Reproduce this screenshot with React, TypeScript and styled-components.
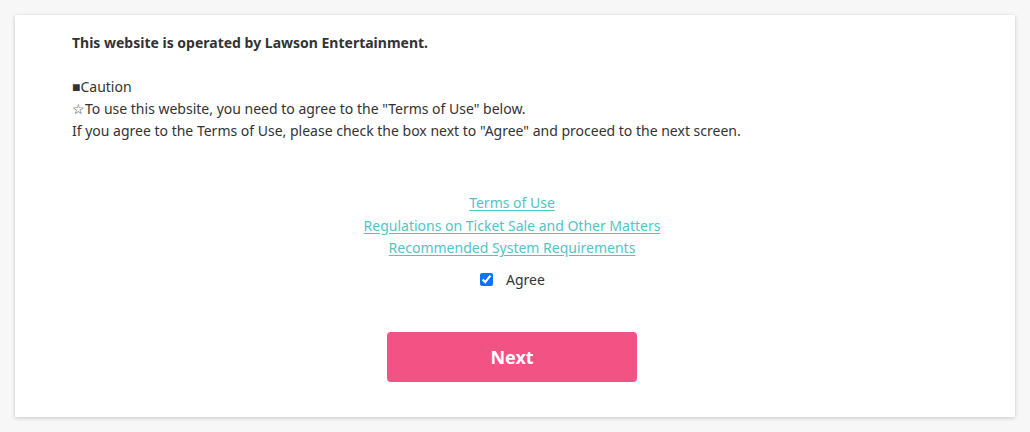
import React, { useState } from "react";
import styled, { createGlobalStyle } from "styled-components";

const GlobalStyle = createGlobalStyle`
  html, body {
    margin: 0;
    padding: 0;
    background: #f7f7f7;
  }
  body {
    font-family: "Noto Sans", "Liberation Sans", sans-serif;
    color: #333;
  }
`;

const Page = styled.div`
  padding: 15px 15px 16px;
`;

const Card = styled.div`
  background: #fff;
  box-shadow: 0 1px 4px rgba(0, 0, 0, 0.2);
  padding: 17px 63px 35px 57px;
  display: flex;
  flex-direction: column;
`;

const Title = styled.p`
  margin: 0;
  font-size: 14px;
  font-weight: 700;
  line-height: 22px;
  color: #333;
`;

const Notice = styled.div`
  margin-top: 22px;
  font-size: 14px;
  line-height: 22px;
`;

const Links = styled.div`
  margin-top: 50px;
  display: flex;
  flex-direction: column;
  align-items: center;
`;

const Link = styled.a`
  font-size: 14px;
  line-height: 22.5px;
  color: #52c4c4;
  text-decoration: underline;
  text-underline-offset: 2px;
  cursor: pointer;
`;

const AgreeRow = styled.label`
  margin-top: 10px;
  display: flex;
  justify-content: center;
  align-items: center;
  gap: 13px;
  font-size: 14px;
  line-height: 20px;
  margin-left: 1px;
`;

const Check = styled.input`
  width: 13px;
  height: 13px;
  margin: 0;
  accent-color: #0a74ff;
`;

const Actions = styled.div`
  margin-top: 42px;
  display: flex;
  justify-content: center;
`;

const NextButton = styled.button`
  width: 250px;
  height: 50px;
  border: none;
  border-radius: 4px;
  background: #f25284;
  color: #fff;
  font-family: inherit;
  font-size: 18px;
  font-weight: 700;
  cursor: pointer;
`;

export default function App() {
  const [agreed, setAgreed] = useState(true);
  return (
    <>
      <GlobalStyle />
      <Page>
        <Card>
          <Title>This website is operated by Lawson Entertainment.</Title>
          <Notice>
            ■Caution
            <br />
            ☆To use this website, you need to agree to the "Terms of Use" below.
            <br />
            If you agree to the Terms of Use, please check the box next to "Agree" and proceed to the next screen.
          </Notice>
          <Links>
            <Link>Terms of Use</Link>
            <Link>Regulations on Ticket Sale and Other Matters</Link>
            <Link>Recommended System Requirements</Link>
          </Links>
          <AgreeRow>
            <Check type="checkbox" checked={agreed} onChange={(e) => setAgreed(e.target.checked)} />
            Agree
          </AgreeRow>
          <Actions>
            <NextButton>Next</NextButton>
          </Actions>
        </Card>
      </Page>
    </>
  );
}
